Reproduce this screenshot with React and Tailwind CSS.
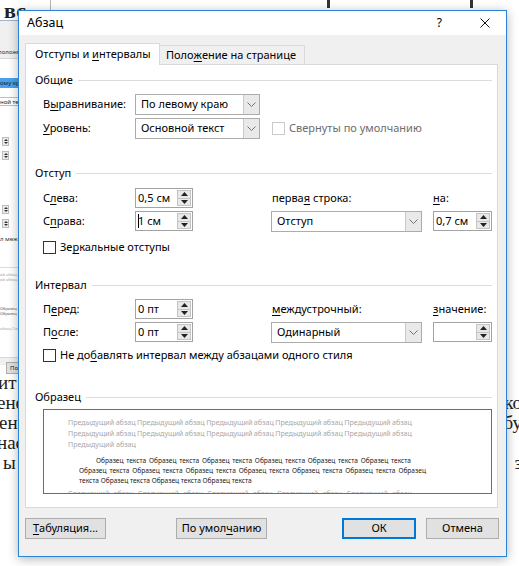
import React from "react";

const ui = "font-['Noto_Sans',sans-serif]";
const serif = "font-['Liberation_Serif','Times_New_Roman',serif]";

const U = ({ children }) => (
  <span className="underline decoration-1 underline-offset-[2px]">{children}</span>
);

const Chevron = () => (
  <svg width="9" height="5" viewBox="0 0 9 5">
    <path d="M0.5 0.5L4.5 4.5L8.5 0.5" fill="none" stroke="#707070" strokeWidth="1" />
  </svg>
);

const SpinArrows = () => (
  <div className="flex flex-col w-[14px] my-px mr-px border border-[#c4c4c4] bg-[#e8e8e8]">
    <div className="flex-1 flex items-center justify-center border-b border-[#c4c4c4]">
      <svg width="7" height="4" viewBox="0 0 7 4">
        <path d="M0 4L3.5 0L7 4Z" fill="#222" />
      </svg>
    </div>
    <div className="flex-1 flex items-center justify-center">
      <svg width="7" height="4" viewBox="0 0 7 4">
        <path d="M0 0L7 0L3.5 4Z" fill="#222" />
      </svg>
    </div>
  </div>
);

const Spin = ({ value, caret, className = "w-[58px]" }) => (
  <div className={`flex h-[20px] border border-[#a3a3a3] bg-white ${className}`}>
    <div className="flex-1 flex items-center pl-[2px] whitespace-nowrap">
      {caret && <span className="inline-block w-px h-[14px] bg-black mr-[-1px]" />}
      {value}
    </div>
    <SpinArrows />
  </div>
);

const Combo = ({ value, className }) => (
  <div className={`flex h-[21px] border border-[#acacac] bg-white ${className}`}>
    <div className="flex-1 flex items-center pl-[5px] whitespace-nowrap">{value}</div>
    <div className="w-[16px] flex items-center justify-center bg-[#e9e9e9] border-l border-[#c9c9c9]">
      <Chevron />
    </div>
  </div>
);

const Check = ({ label, disabled }) => (
  <div className="flex items-center h-[15px] gap-[4px]">
    <div
      className={`w-[13px] h-[13px] bg-white border ${
        disabled ? "border-[#cbcbcb]" : "border-[#333333]"
      }`}
    />
    <span className={`whitespace-nowrap ${disabled ? "text-[#6d6d6d]" : ""}`}>{label}</span>
  </div>
);

const Section = ({ title, className = "" }) => (
  <div className={`flex items-center h-[14px] gap-[5px] pr-[5px] ${className}`}>
    <span className="whitespace-nowrap">{title}</span>
    <div className="flex-1 h-px bg-[#dcdcdc]" />
  </div>
);

const Btn = ({ children, className = "", primary }) => (
  <div
    className={`h-[21px] flex items-center justify-center bg-[#e1e1e1] ${
      primary ? "border-2 border-[#0078d7]" : "border border-[#adadad]"
    } ${className}`}
  >
    {children}
  </div>
);

// a justified line of the preview: words spread over a fixed width
const Line = ({ text, className }) => (
  <div className={`flex justify-between whitespace-nowrap ${className}`}>
    {text.split(" ").map((w, i) => (
      <span key={i}>{w}</span>
    ))}
  </div>
);

const rep = (s, n) => Array(n).fill(s).join(" ");

const Preview = () => (
  <div className="ml-[8px] w-[449px] h-[85px] border border-[#6d6d6d] bg-white overflow-hidden text-[6.6px]">
    <div className="pl-[24px] pt-[7px] leading-[11px] text-[7.1px] text-[#a8a8a8]">
      <Line text={rep("Предыдущий абзац", 5)} className="w-[344px]" />
      <Line text={rep("Предыдущий абзац", 5)} className="w-[344px]" />
      <div className="whitespace-nowrap">Предыдущий абзац</div>
    </div>
    <div className="pl-[35px] mt-[6px] leading-[10px] text-[#1a1a1a]">
      <Line text={rep("Образец текста", 6)} className="ml-[17px] w-[315px]" />
      <Line text={rep("Образец текста", 6) + " Образец"} className="w-[347px]" />
      <div className="whitespace-nowrap">текста Образец текста Образец текста Образец текста</div>
    </div>
    <div className="pl-[24px] mt-[2px] leading-[10px] text-[7.1px] text-[#a8a8a8]">
      <Line text={rep("Следующий абзац", 5)} className="w-[344px]" />
    </div>
  </div>
);

const Dialog = () => (
  <div className="absolute left-[18px] top-[10px] w-[489px] h-[547px] border border-[#2b83d6] bg-[#f0f0f0] shadow-[0_2px_10px_rgba(0,0,0,0.3)] flex flex-col text-[11px] text-black">
    {/* title bar */}
    <div className="h-[24px] bg-white flex items-center pl-[8px] pr-[16px]">
      <span className="text-[12.5px]">Абзац</span>
      <span className="ml-auto text-[12px] leading-none">?</span>
      <svg className="ml-[38px]" width="10" height="10" viewBox="0 0 10 10">
        <path d="M0.5 0.5L9.5 9.5M9.5 0.5L0.5 9.5" stroke="#111" strokeWidth="1" />
      </svg>
    </div>

    <div className="px-[6px] pt-[8px]">
      {/* tabs */}
      <div className="flex items-end h-[21px]">
        <div className="relative z-10 w-[135px] h-[22px] -mb-px bg-white border border-b-0 border-[#d9d9d9] flex items-center pl-[9px] whitespace-pre">
          {"Отступы и "}<U>и</U>{"нтервалы"}
        </div>
        <div className="w-[145px] h-[19px] border-t border-r border-[#d9d9d9] flex items-center pl-[6px] whitespace-pre">
          {"Поло"}<U>ж</U>{"ение на странице"}
        </div>
      </div>

      {/* panel */}
      <div className="w-[473px] h-[444px] bg-white border border-[#d9d9d9] pl-[9px]">
        <Section title="Общие" className="mt-[8px]" />
        <div className="pl-[8px]">
          <div className="flex items-center mt-[7px]">
            <span className="w-[92px]">В<U>ы</U>равнивание:</span>
            <Combo value="По левому краю" className="w-[125px]" />
          </div>
          <div className="flex items-center mt-[3px]">
            <span className="w-[92px]"><U>У</U>ровень:</span>
            <Combo value="Основной текст" className="w-[125px]" />
            <div className="ml-[12px]">
              <Check label="Свернуты по умолчанию" disabled />
            </div>
          </div>
        </div>

        <Section title="Отступ" className="mt-[27px]" />
        <div className="pl-[8px]">
          <div className="flex items-center h-[20px] mt-[8px]">
            <span className="w-[92px]">С<U>л</U>ева:</span>
            <div className="w-[136px]"><Spin value="0,5 см" /></div>
            <span className="w-[162px] pl-px">перва<U>я</U> строка:</span>
            <span><U>н</U>а:</span>
          </div>
          <div className="flex items-start h-[21px] mt-[3px]">
            <span className="w-[92px] h-[20px] flex items-center">С<U>п</U>рава:</span>
            <div className="w-[136px]"><Spin value="1 см" caret /></div>
            <div className="w-[162px]"><Combo value="Отступ" className="w-[151px]" /></div>
            <Spin value="0,7 см" className="w-[59px]" />
          </div>
          <div className="mt-[8px]">
            <Check label={<>Зе<U>р</U>кальные отступы</>} />
          </div>
        </div>

        <Section title="Интервал" className="mt-[23px]" />
        <div className="pl-[8px]">
          <div className="flex items-center h-[20px] mt-[7px]">
            <span className="w-[92px]">П<U>е</U>ред:</span>
            <div className="w-[136px]"><Spin value="0 пт" /></div>
            <span className="w-[162px] pl-px"><U>м</U>еждустрочный:</span>
            <span><U>з</U>начение:</span>
          </div>
          <div className="flex items-start h-[21px] mt-[3px]">
            <span className="w-[92px] h-[20px] flex items-center">П<U>о</U>сле:</span>
            <div className="w-[136px]"><Spin value="0 пт" /></div>
            <div className="w-[162px]"><Combo value="Одинарный" className="w-[151px]" /></div>
            <Spin value="" className="w-[59px]" />
          </div>
          <div className="mt-[5px]">
            <Check label={<>Не до<U>б</U>авлять интервал между абзацами одного стиля</>} />
          </div>
        </div>

        <Section title="Образец" className="mt-[27px]" />
        <div className="mt-[5px]">
          <Preview />
        </div>
      </div>

      {/* buttons */}
      <div className="flex mt-[10px]">
        <Btn className="w-[81px]"><U>Т</U>абуляция...</Btn>
        <Btn className="w-[91px] ml-[70px]">По умол<U>ч</U>анию</Btn>
        <Btn className="w-[74px] ml-[75px]" primary>ОК</Btn>
        <Btn className="w-[73px] ml-[10px]">Отмена</Btn>
      </div>
    </div>
  </div>
);

const SmallSpin = () => (
  <div className="w-[7px] h-[9px] ml-[2px] border border-[#bdbdbd] bg-[#ececec] flex flex-col items-center justify-center gap-px">
    <svg width="4" height="2" viewBox="0 0 4 2"><path d="M0 2L2 0L4 2Z" fill="#333" /></svg>
    <svg width="4" height="2" viewBox="0 0 4 2"><path d="M0 0L4 0L2 2Z" fill="#333" /></svg>
  </div>
);

const BehindDialog = () => (
  <div className={`w-[40px] h-[345px] bg-[#f0f0f0] border-t border-[#9fb3c8] text-[6px] leading-none ${ui}`}>
    <div className="h-[24px]" />
    <div className="h-[13px] flex items-center whitespace-nowrap -ml-[2px] text-[#333]">положе</div>
    <div className="h-[300px] bg-white border-y border-[#d9d9d9] pt-[19px]">
      <div className="h-[10px] w-[18px] bg-[#4aa0ec] text-[#123] flex items-center whitespace-nowrap overflow-hidden">ому кр</div>
      <div className="h-[9px] mt-[9px] w-[18px] border-y border-[#c0c0c0] flex items-center whitespace-nowrap overflow-hidden text-[#222]">ной те</div>
      <div className="mt-[31px]"><SmallSpin /></div>
      <div className="mt-[5px]"><SmallSpin /></div>
      <div className="mt-[45px]"><SmallSpin /></div>
      <div className="mt-[5px]"><SmallSpin /></div>
      <div className="mt-[8px] whitespace-nowrap text-[#333]">л меж</div>
      <div className="mt-[25px] h-px bg-[#dcdcdc] w-[18px]" />
      <div className="mt-[4px] whitespace-nowrap text-[4px] leading-[5px] text-[#aaa]">
        <div>ий абзац</div>
        <div>ий абзац</div>
      </div>
      <div className="mt-[24px] whitespace-nowrap text-[4px] leading-[5px] text-[#555]">
        <div>Образец т</div>
        <div>Образец т</div>
      </div>
      <div className="mt-[10px] whitespace-nowrap text-[4px] leading-[5px] text-[#aaa]">абзац Сле</div>
    </div>
    <div className="mt-[4px] ml-[6px] h-[12px] w-[30px] bg-[#e1e1e1] border border-[#adadad] flex items-center pl-[3px] whitespace-nowrap text-[#222]">По у</div>
  </div>
);

const docLines = [
  { l: "ит", lm: "-ml-[2px]", r: "" },
  { l: "ене", lm: "-ml-[3px]", r: "ко" },
  { l: "ен", lm: "-ml-[1px]", r: "бу" },
  { l: "нас", lm: "-ml-[3px]", r: "" },
  { l: "ы", lm: "ml-[3px]", r: "з" },
];

export default function App() {
  return (
    <div className={`relative w-[519px] h-[566px] overflow-hidden bg-white ${ui}`}>
      {/* document behind the dialog */}
      <div className="flex flex-col h-full">
        <div className="h-[20px] flex items-start">
          <span className={`${serif} font-bold text-[22px] leading-none ml-[4px] text-[#222]`}>вс</span>
          <div className="ml-[24px] w-px h-[10px] bg-[#b5b5b5]" />
          <div className="ml-[276px] w-[3px] h-[8px] bg-[#333]" />
          <div className="ml-[140px] w-[3px] h-[8px] bg-[#333]" />
        </div>
        <BehindDialog />
        <div className={`mt-[8px] ${serif} text-[19px] leading-[20px] text-[#222]`}>
          {docLines.map((d, i) => (
            <div key={i} className="flex justify-between h-[20px] whitespace-nowrap">
              <span className={d.lm}>{d.l}</span>
              <span className="-mr-[3px]">{d.r}</span>
            </div>
          ))}
        </div>
      </div>

      <Dialog />
    </div>
  );
}
